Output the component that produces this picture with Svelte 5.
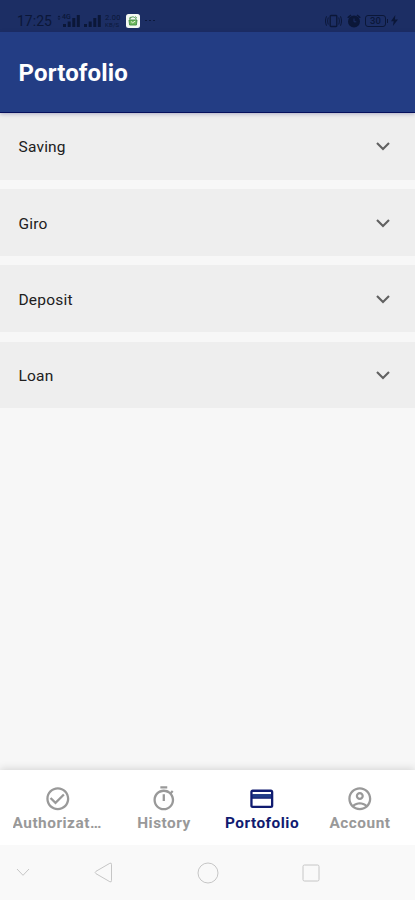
<script lang="ts">
  const sections = ['Saving', 'Giro', 'Deposit', 'Loan'];

  // Material outlined glyphs, all on a 24x24 grid
  const tabs = [
    {
      label: 'Authorization',
      icon: 'M16.59 7.58 10 14.17l-3.59-3.58L5 12l5 5 8-8zM12 2C6.48 2 2 6.48 2 12s4.48 10 10 10 10-4.48 10-10S17.52 2 12 2zm0 18c-4.42 0-8-3.58-8-8s3.58-8 8-8 8 3.58 8 8-3.58 8-8 8z'
    },
    {
      label: 'History',
      icon: 'M15 1H9v2h6V1zm-4 13h2V8h-2v6zm8.03-6.61 1.42-1.42c-.43-.51-.9-.99-1.41-1.41l-1.42 1.42C16.07 4.74 14.12 4 12 4c-4.97 0-9 4.03-9 9s4.02 9 9 9 9-4.03 9-9c0-2.12-.74-4.07-1.97-5.61zM12 20c-3.87 0-7-3.13-7-7s3.13-7 7-7 7 3.13 7 7-3.13 7-7 7z'
    },
    {
      label: 'Portofolio',
      icon: 'M20 4H4c-1.11 0-1.99.89-1.99 2L2 18c0 1.11.89 2 2 2h16c1.11 0 2-.89 2-2V6c0-1.11-.89-2-2-2zm0 14H4v-6h16v6zm0-10H4V6h16v2z'
    },
    {
      label: 'Account',
      icon: 'M12 2C6.48 2 2 6.48 2 12s4.48 10 10 10 10-4.48 10-10S17.52 2 12 2zM7.35 18.5C8.66 17.56 10.26 17 12 17s3.34.56 4.65 1.5C15.34 19.44 13.74 20 12 20s-3.34-.56-4.65-1.5zm10.79-1.38C16.45 15.8 14.32 15 12 15s-4.45.8-6.14 2.12C4.7 15.73 4 13.95 4 12c0-4.42 3.58-8 8-8s8 3.58 8 8c0 1.95-.7 3.73-1.86 5.12zM12 6c-1.93 0-3.5 1.57-3.5 3.5S10.07 13 12 13s3.5-1.57 3.5-3.5S13.93 6 12 6zm0 5c-.83 0-1.5-.67-1.5-1.5S11.17 8 12 8s1.5.67 1.5 1.5S12.83 11 12 11z'
    }
  ];

  let active = $state('Portofolio');
</script>

<div class="screen">
  <div class="status">
    <span class="clock">17:25</span>
    <div class="network">
      <svg width="4" height="6" viewBox="0 0 5 6"><path d="M2.5 0 4.3 2H.7zM2.5 5.5.7 3.5h3.6z" /></svg>
      <div class="mobile">
        <span class="gen">4G</span>
        <svg width="17" height="12" viewBox="0 0 17 12"><path d="M0 9h3v3H0zM4.7 6.5h3V12h-3zM9.3 3h3v9h-3zM13.8 0h3v12h-3z" /></svg>
      </div>
      <svg class="sim2" width="17" height="12" viewBox="0 0 17 12"><path d="M0 9h3v3H0zM4.7 6.5h3V12h-3zM9.3 3h3v9h-3zM13.8 0h3v12h-3z" /></svg>
    </div>
    <div class="speed"><span class="rate">2.00</span><span class="unit">KB/S</span></div>
    <svg class="app" width="14" height="14" viewBox="0 0 14 14">
      <rect width="14" height="14" rx="2.5" fill="#f4f9f3" />
      <path d="M3 6h8l-.6 5H3.6z" fill="#6fb85c" />
      <path d="M4 5.5c.5-3.500 5-3.500 6 0M3 4.500l2-1.500M9 2.500l2 1.700M3 6h8l-.6 5H3.600z" fill="none" stroke="#3d8a42" stroke-width=".9" />
      <path d="m5 7.500 1.700 1.300L9.300 7" fill="none" stroke="#e3f2d8" stroke-width="1" />
    </svg>
    <span class="more"><i></i><i></i><i></i></span>

    <div class="system">
      <svg width="17" height="14" viewBox="0 0 17 14">
        <rect x="5.2" y="1.5" width="6.6" height="11" rx=".8" fill="none" stroke="currentColor" stroke-width="1.3" />
        <path d="M3.300 3.500c-.8 2-.8 5 0 7M1.500 2.300c-1.300 2.800-1.300 6.600 0 9.400M13.700 3.500c.8 2 .8 5 0 7M15.500 2.300c1.300 2.800 1.300 6.600 0 9.400" fill="none" stroke="currentColor" />
      </svg>
      <svg width="14" height="14" viewBox="0 0 14 14">
        <circle cx="7" cy="7.5" r="6" />
        <path d="M.7 3.800 4 1M13.300 3.800 10 1" stroke="currentColor" stroke-width="1.5" />
        <path d="M7 4.500v3.300h2.300" fill="none" stroke="#1c2f66" />
      </svg>
      <span class="battery">30</span>
      <svg class="bolt" width="7" height="11" viewBox="0 0 7 11"><path d="M4.300 0 0 6.200h2.700L1.900 11 7 4.400H3.900z" /></svg>
    </div>
  </div>

  <header>
    <h1>Portofolio</h1>
  </header>

  <main>
    {#each sections as name (name)}
      <button class="section">
        <span>{name}</span>
        <svg width="14" height="9" viewBox="0 0 14 9"><path d="m1 1 6 6 6-6" fill="none" stroke="#616161" stroke-width="2.1" /></svg>
      </button>
    {/each}
  </main>

  <nav class="tabs">
    {#each tabs as tab (tab.label)}
      <button class="tab" class:active={active === tab.label} onclick={() => (active = tab.label)}>
        <svg width="27.6" height="27.6" viewBox="0 0 24 24">
          <path d={tab.icon} />
          {#if tab.label === 'Portofolio'}
            <path d="M4 8h16v3H4z" fill="#213d87" />
          {/if}
        </svg>
        <span>{tab.label}</span>
      </button>
    {/each}
  </nav>

  <div class="system-nav">
    <svg width="14" height="9" viewBox="0 0 14 9"><path d="m1 1 6 6.3L13 1" /></svg>
    <svg width="19" height="21" viewBox="0 0 19 21"><path d="M15.800 1.300 2 9.300q-1.700 1.200 0 2.400l13.800 8q1.700.8 1.700-1V2.300q0-1.800-1.700-1z" /></svg>
    <svg width="22" height="22" viewBox="0 0 22 22"><circle cx="11" cy="11" r="10" /></svg>
    <svg width="18" height="18" viewBox="0 0 18 18"><rect x="1" y="1" width="16" height="16" rx="1.5" /></svg>
  </div>
</div>

<style>
  :global(body) { margin: 0; }

  .screen {
    display: flex;
    flex-direction: column;
    width: 415px;
    height: 900px;
    overflow: hidden;
    background: #f7f7f7;
    font-family: Roboto, sans-serif;
  }
  svg { display: block; flex: none; fill: currentColor; }
  button {
    border: 0;
    padding: 0;
    margin: 0;
    font: inherit;
    color: inherit;
    background: none;
  }

  .status {
    display: flex;
    align-items: center;
    box-sizing: border-box;
    height: 32px;
    padding: 9px 17px 0;
    background: #1c2e64;
    color: #0b1738;
    z-index: 1;
  }
  .clock { width: 40px; font-size: 14px; }
  .network { display: flex; height: 12px; }
  .mobile { position: relative; margin-left: 2px; }
  .gen {
    position: absolute;
    left: -1px;
    top: -1px;
    font-size: 7px;
    line-height: 7px;
    font-weight: 500;
  }
  .sim2 { margin-left: 4px; }
  .speed {
    display: flex;
    flex-direction: column;
    width: 17px;
    margin-left: 4px;
  }
  .rate { font-size: 7.5px; line-height: 7px; letter-spacing: 0.3px; }
  .unit { font-size: 6px; line-height: 7px; letter-spacing: 0.2px; }
  .app { margin-left: 4px; }
  .more { display: flex; gap: 2.5px; margin-left: 5px; }
  .more i { width: 1.7px; height: 1.7px; border-radius: 50%; background: currentColor; }
  .system { display: flex; align-items: center; margin-left: auto; gap: 5px; }
  .battery {
    position: relative;
    box-sizing: border-box;
    width: 21px;
    height: 12px;
    margin-left: -1px;
    border: 1px solid currentColor;
    border-radius: 3px;
    font-size: 9.5px;
    font-weight: 500;
    line-height: 10px;
    text-align: center;
  }
  .battery::after {
    content: '';
    position: absolute;
    right: -3px;
    top: 3px;
    width: 1.5px;
    height: 4px;
    background: currentColor;
  }

  header {
    display: flex;
    align-items: center;
    box-sizing: border-box;
    height: 81px;
    padding-left: 18.5px;
    background: #233d84;
    border-bottom: 1px solid #050f5c;
    box-shadow: 0 1px 4px rgba(20, 20, 100, 0.3);
    z-index: 1;
  }
  h1 {
    margin: 1px 0 0;
    font-size: 24px;
    font-weight: 700;
    letter-spacing: 0.15px;
    color: #fff;
  }

  main {
    display: flex;
    flex: 1;
    flex-direction: column;
    gap: 9.3px;
  }
  .section {
    display: flex;
    align-items: center;
    justify-content: space-between;
    height: 66.9px;
    padding: 1px 25.5px 0 18.5px;
    background: #eee;
    color: #202020;
    font-size: 15.5px;
    letter-spacing: 0.2px;
  }
  .section span { padding-top: 1px; }

  .tabs {
    display: grid;
    grid-template-columns: 115px repeat(3, 98px);
    box-sizing: border-box;
    height: 75px;
    padding-top: 15px;
    background: #fff;
    box-shadow: 0 -1px 8px rgba(0, 0, 0, 0.15);
  }
  .tab {
    display: flex;
    flex-direction: column;
    align-items: center;
    gap: 1px;
    min-width: 0;
    color: #999;
    font-size: 15.4px;
    font-weight: 700;
    letter-spacing: 0.5px;
  }
  .tab span {
    max-width: 90px;
    overflow: hidden;
    text-overflow: ellipsis;
    white-space: nowrap;
  }
  .tab.active { color: #101b70; }

  .system-nav {
    display: flex;
    align-items: center;
    box-sizing: border-box;
    height: 55px;
    padding-left: 16px;
    background: #f9f9f9;
    z-index: 1;
  }
  .system-nav svg { fill: none; stroke: #c6c6c6; stroke-width: 1; }
  .system-nav svg + svg { margin-left: 64px; }
  .system-nav svg:nth-child(3) { margin-left: 83.5px; }
  .system-nav svg:nth-child(4) { margin-left: 83.5px; }
</style>
